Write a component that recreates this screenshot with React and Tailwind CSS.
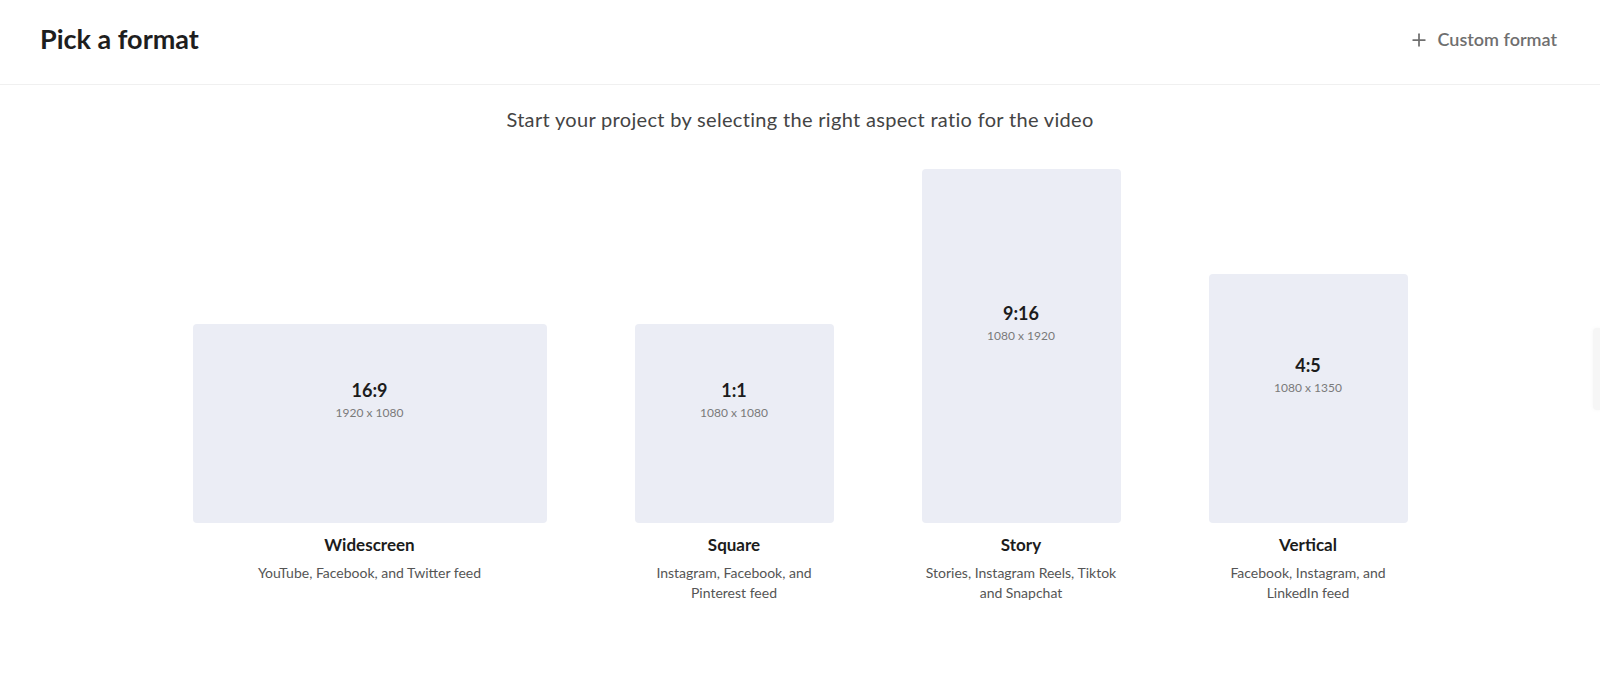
import { Plus } from 'lucide-react'

const formats = [
  { ratio: '16:9', size: '1920 x 1080', name: 'Widescreen', desc: 'YouTube, Facebook, and Twitter feed', w: 'w-[354px]', h: 'h-[199px]' },
  { ratio: '1:1', size: '1080 x 1080', name: 'Square', desc: 'Instagram, Facebook, and Pinterest feed', w: 'w-[199px]', h: 'h-[199px]' },
  { ratio: '9:16', size: '1080 x 1920', name: 'Story', desc: 'Stories, Instagram Reels, Tiktok and Snapchat', w: 'w-[199px]', h: 'h-[354px]' },
  { ratio: '4:5', size: '1080 x 1350', name: 'Vertical', desc: 'Facebook, Instagram, and LinkedIn feed', w: 'w-[199px]', h: 'h-[249px]' },
]

function FormatCard({ f }) {
  return (
    <div className={`flex flex-col items-center ${f.w}`}>
      {/* card sits at the bottom of a fixed-height slot so all bottoms line up */}
      <div className="h-[354px] w-full flex items-end">
        <button className={`${f.w} ${f.h} rounded bg-[#ebedf5] flex flex-col items-center justify-center pb-[48px] hover:bg-[#e2e6f1] transition`}>
          <span className="text-[18px] leading-6 font-bold text-[#1c1c1c]">{f.ratio}</span>
          <span className="text-[12px] leading-4 mt-[3px] text-[#7a7a7a]">{f.size}</span>
        </button>
      </div>
      <h3 className="mt-[10px] text-[17px] leading-6 font-bold text-[#1c1c1c]">{f.name}</h3>
      <p className="mt-[6px] px-[4px] text-[14px] leading-5 text-[#555] text-center">{f.desc}</p>
    </div>
  )
}

export default function App() {
  return (
    <div className="relative min-h-screen bg-white overflow-hidden" style={{ fontFamily: 'Lato, "Open Sans", sans-serif' }}>
      {/* Header */}
      <header className="h-[85px] pb-[5px] border-b border-[#f0f0f0] flex items-center justify-between pl-10 pr-[43px]">
        <h1 className="text-[27px] font-bold text-[#1e1e1e]">Pick a format</h1>
        <button className="flex items-center gap-[9px] text-[#6f6f6f] hover:text-[#444]">
          <Plus size={20} strokeWidth={2.1} />
          <span className="text-[18px] font-semibold">Custom format</span>
        </button>
      </header>

      <p className="mt-[22px] text-center text-[20px] leading-6 text-[#444] tracking-[0.32px]">
        Start your project by selecting the right aspect ratio for the video
      </p>

      <div className="mt-[38px] flex justify-center items-start gap-[88px]">
        {formats.map((f) => (
          <FormatCard key={f.name} f={f} />
        ))}
      </div>

      {/* side tab peeking in from the right edge */}
      <div className="absolute right-0 top-[328px] w-[7px] h-[82px] bg-[#f6f6f6] rounded-l shadow-[0_0_4px_rgba(0,0,0,0.04)]" />
    </div>
  )
}
